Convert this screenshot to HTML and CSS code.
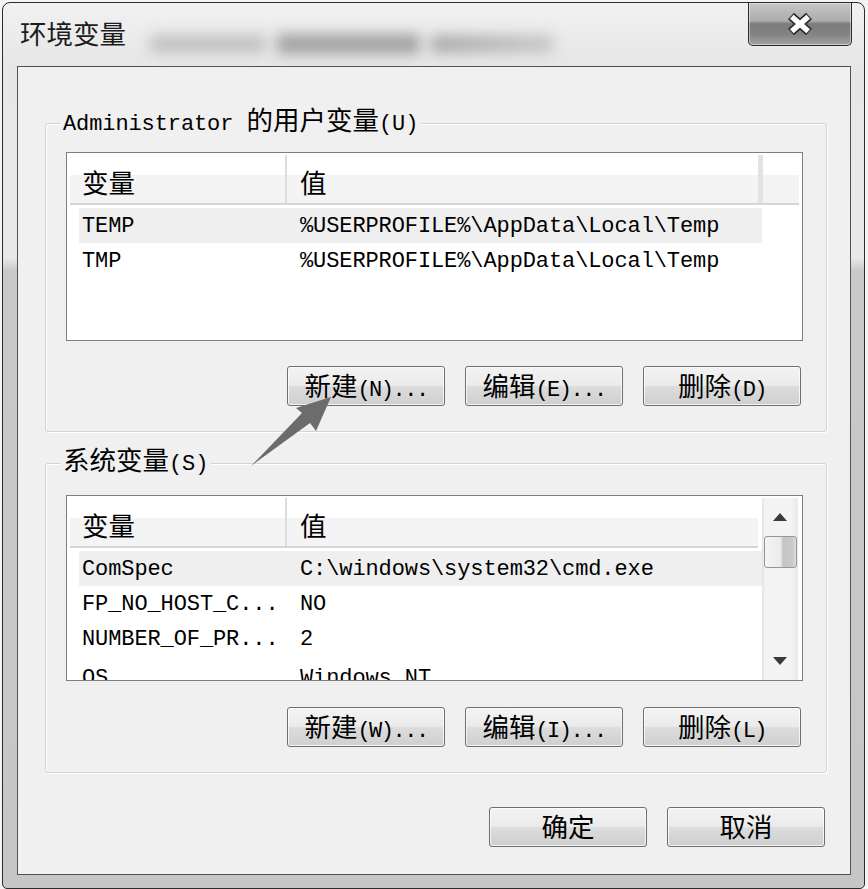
FILE: index.html
```html
<!DOCTYPE html>
<html lang="zh-CN">
<head>
<meta charset="utf-8">
<title>环境变量</title>
<link rel="stylesheet" href="styles.css">
</head>
<body>
<div class="window">
  <div class="titlebar">
    <span class="title cjk">环境变量</span>
    <div class="glass-blur" aria-hidden="true"><i class="b1"></i><i class="b2"></i><i class="b3"></i></div>
    <button class="close" aria-label="关闭">
      <svg width="28" height="24" viewBox="0 0 28 24">
        <path d="M5 4 L23 20 M23 4 L5 20" stroke="#2e2e2e" stroke-width="9" fill="none"/>
        <path d="M5.8 4.8 L22.2 19.2 M22.2 4.8 L5.8 19.2" stroke="#ffffff" stroke-width="5.5" fill="none"/>
      </svg>
    </button>
  </div>
  <div class="client">
    <fieldset class="group group-user">
      <legend><span>Administrator </span><span class="cjk">的用户变量</span><span>(U)</span></legend>
      <div class="listbox listbox-user">
        <div class="lv-header">
          <div class="hc c1"><span class="cjk">变量</span></div>
          <div class="hc c2 c2-div"><span class="cjk">值</span></div>
          <div class="hc c3"></div>
        </div>
        <div class="lv-rows">
          <div class="lv-row sel"><span class="rc1">TEMP</span><span class="rc2">%USERPROFILE%\AppData\Local\Temp</span></div>
          <div class="lv-row"><span class="rc1">TMP</span><span class="rc2">%USERPROFILE%\AppData\Local\Temp</span></div>
        </div>
      </div>
      <div class="btn-row">
        <button class="btn"><span class="cjk">新建</span>(N)...</button>
        <button class="btn"><span class="cjk">编辑</span>(E)...</button>
        <button class="btn"><span class="cjk">删除</span>(D)</button>
      </div>
    </fieldset>

    <fieldset class="group group-sys">
      <legend><span class="cjk">系统变量</span><span>(S)</span></legend>
      <div class="listbox listbox-sys">
        <div class="lv-main">
          <div class="lv-header lv-header-short">
            <div class="hc c1"><span class="cjk">变量</span></div>
            <div class="hc c2"><span class="cjk">值</span></div>
          </div>
          <div class="lv-rows">
            <div class="lv-row sel"><span class="rc1">ComSpec</span><span class="rc2">C:\windows\system32\cmd.exe</span></div>
            <div class="lv-row"><span class="rc1">FP_NO_HOST_C...</span><span class="rc2">NO</span></div>
            <div class="lv-row"><span class="rc1">NUMBER_OF_PR...</span><span class="rc2">2</span></div>
            <div class="lv-row lv-row-last"><span class="rc1">OS</span><span class="rc2">Windows_NT</span></div>
          </div>
        </div>
        <div class="vscroll">
          <div class="sb-btn">
            <svg width="14" height="9" viewBox="0 0 14 9"><polygon points="0,8 7,0 14,8" fill="#3a3a3a"/></svg>
          </div>
          <div class="sb-thumb"></div>
          <div class="sb-track"></div>
          <div class="sb-btn">
            <svg width="14" height="9" viewBox="0 0 14 9"><polygon points="0,0 14,0 7,8" fill="#3a3a3a"/></svg>
          </div>
        </div>
      </div>
      <div class="btn-row btn-row-sys">
        <button class="btn"><span class="cjk">新建</span>(W)...</button>
        <button class="btn"><span class="cjk">编辑</span>(I)...</button>
        <button class="btn"><span class="cjk">删除</span>(L)</button>
      </div>
    </fieldset>

    <div class="dlg-buttons">
      <button class="btn"><span class="cjk">确定</span></button>
      <button class="btn"><span class="cjk">取消</span></button>
    </div>

    <svg class="pointer-arrow" width="84" height="72" viewBox="0 0 84 72" aria-hidden="true">
      <polygon points="81,1 66,35 60,27 1,70 52,17 46,12" fill="#6c6c6c"/>
    </svg>
  </div>
</div>
</body>
</html>
```

FILE: styles.css
```css
* {
  box-sizing: border-box;
}

html,
body {
  margin: 0;
  height: 100%;
}

body {
  background: #f4f4f4;
  font-family: "Liberation Mono", "Noto Sans CJK SC", monospace;
  font-size: 22px;
  letter-spacing: -0.1px;
  color: #000000;
  overflow: hidden;
}

.cjk {
  font-family: "Noto Sans CJK SC", "Noto Sans CJK JP", sans-serif;
  font-size: 26.5px;
  letter-spacing: 0;
}

/* ---------- window frame ---------- */
.window {
  margin: 2px 0 0 2px;
  width: 863px;
  height: 887px;
  border: 1px solid #2c2c2c;
  border-radius: 8px 8px 5px 5px;
  background: linear-gradient(#f1f1f1 0, #e7e7e7 60px, #e8e8e8 255px, #c9c9c9 268px, #c6c6c6 100%);
  display: flex;
  flex-direction: column;
  overflow: hidden;
}

.titlebar {
  height: 63px;
  flex: none;
  display: flex;
  align-items: flex-start;
  padding-left: 17px;
}

.title {
  line-height: 60px;
  color: #1c1c1c;
}

.glass-blur {
  display: flex;
  align-items: center;
  gap: 11px;
  margin: 26px 0 0 24px;
  height: 30px;
  filter: blur(7px);
  opacity: 0.75;
}

.glass-blur i {
  display: block;
  height: 18px;
}

.glass-blur .b1 {
  width: 116px;
  background: #b4b4b4;
}

.glass-blur .b2 {
  width: 143px;
  height: 20px;
  background: #8a8a8a;
}

.glass-blur .b3 {
  width: 123px;
  background: linear-gradient(to right, #949494, #bdbdbd);
}

.close {
  margin: -1px 12px 0 auto;
  width: 104px;
  height: 44px;
  padding: 0;
  border: 1px solid #2a2a2a;
  border-top-color: #444;
  border-radius: 0 0 5px 5px;
  background: linear-gradient(#c6c6c6 0%, #adadad 42%, #7b7b7b 50%, #838383 75%, #a3a3a3 100%);
  box-shadow: inset 0 0 0 1px rgba(255, 255, 255, 0.45);
  display: flex;
  align-items: center;
  justify-content: center;
}

/* ---------- client area ---------- */
.client {
  position: relative;
  flex: 1;
  margin: 0 13px 13px 14px;
  border: 1px solid #525252;
  background: #f0f0f0;
  padding: 41px 23px 0 27px;
}

.group {
  margin: 0;
  padding: 0 23px 25px 20px;
  min-width: 0;
  border: 1px solid #d3d3d3;
  border-radius: 3px;
  box-shadow: inset 1px 1px 0 #ffffff, 1px 1px 0 #ffffff;
}

.group legend {
  margin-left: -6px;
  padding: 0 3px;
  height: 30px;
  line-height: 22px;
  white-space: pre;
  background: #f0f0f0;
}

.group-sys {
  margin-top: 16px;
}

/* ---------- list view ---------- */
.listbox {
  border: 1px solid #7e7e7e;
  background: #ffffff;
  padding: 2px 3px 0 3px;
  overflow: hidden;
}

.listbox-user {
  margin-top: 14px;
  height: 189px;
}

.listbox-sys {
  margin-top: 17px;
  height: 186px;
  display: flex;
}

.lv-main {
  width: 692px;
  overflow: hidden;
}

.lv-header {
  display: flex;
  height: 50px;
  border-bottom: 2px solid #d6d6d6;
  background: linear-gradient(#ffffff 0, #ffffff 20px, #f4f4f4 20px, #f4f4f4 100%);
}

.lv-header-short {
  width: 688px;
}

.hc {
  padding-top: 14px;
  line-height: 26px;
  height: 48px;
}

.hc.c1 {
  width: 217px;
  padding-left: 12px;
  border-right: 2px solid #dcdcdc;
}

.hc.c2 {
  width: 471px;
  padding-left: 13px;
}

.hc.c2-div {
  width: 476px;
  border-right: 5px solid #e3e3e3;
}

.hc.c3 {
  flex: 1;
}

.lv-rows {
  padding-top: 3px;
}

.lv-row {
  display: flex;
  margin-left: 9px;
  width: 683px;
  height: 35px;
  line-height: 38px;
  white-space: pre;
}

.lv-row.sel {
  background: #efefef;
}

.lv-row-last {
  line-height: 46px;
}

.rc1 {
  width: 221px;
  padding-left: 3px;
}

.rc2 {
  flex: 1;
}

/* ---------- scrollbar ---------- */
.vscroll {
  width: 36px;
  display: flex;
  flex-direction: column;
  background: linear-gradient(to right, #e2e2e2 0, #f3f3f3 3px, #f4f4f4 80%, #e8e8e8 100%);
}

.sb-btn {
  height: 38px;
  flex: none;
  display: flex;
  align-items: center;
  justify-content: center;
}

.sb-thumb {
  height: 32px;
  flex: none;
  margin: 0 1px 0 2px;
  border: 1px solid #969696;
  border-radius: 3px;
  background: linear-gradient(to right, #f4f4f4 0%, #ebebeb 50%, #c6c6c6 58%, #c9c9c9 88%, #dedede 100%);
}

.sb-track {
  flex: 1;
}

/* ---------- buttons ---------- */
.btn-row {
  display: flex;
  justify-content: flex-end;
  gap: 20px;
  margin-top: 25px;
  padding-right: 2px;
}

.btn-row-sys {
  margin-top: 26px;
}

.btn {
  width: 158px;
  height: 40px;
  padding: 0;
  border: 1px solid #6f6f6f;
  border-radius: 3px;
  background: linear-gradient(#f3f3f3 0%, #ebebeb 48%, #dcdcdc 52%, #cfcfcf 100%);
  box-shadow: inset 0 0 0 1px rgba(255, 255, 255, 0.75);
  font-family: inherit;
  font-size: inherit;
  letter-spacing: -1.5px;
  color: #000000;
  line-height: 36px;
  white-space: pre;
}

.btn .cjk {
  letter-spacing: 0;
}

.dlg-buttons {
  display: flex;
  justify-content: flex-end;
  gap: 20px;
  margin-top: 34px;
  padding-right: 2px;
}

/* annotation arrow drawn over the dialog */
.pointer-arrow {
  position: absolute;
  left: 232px;
  top: 329px;
}
```
